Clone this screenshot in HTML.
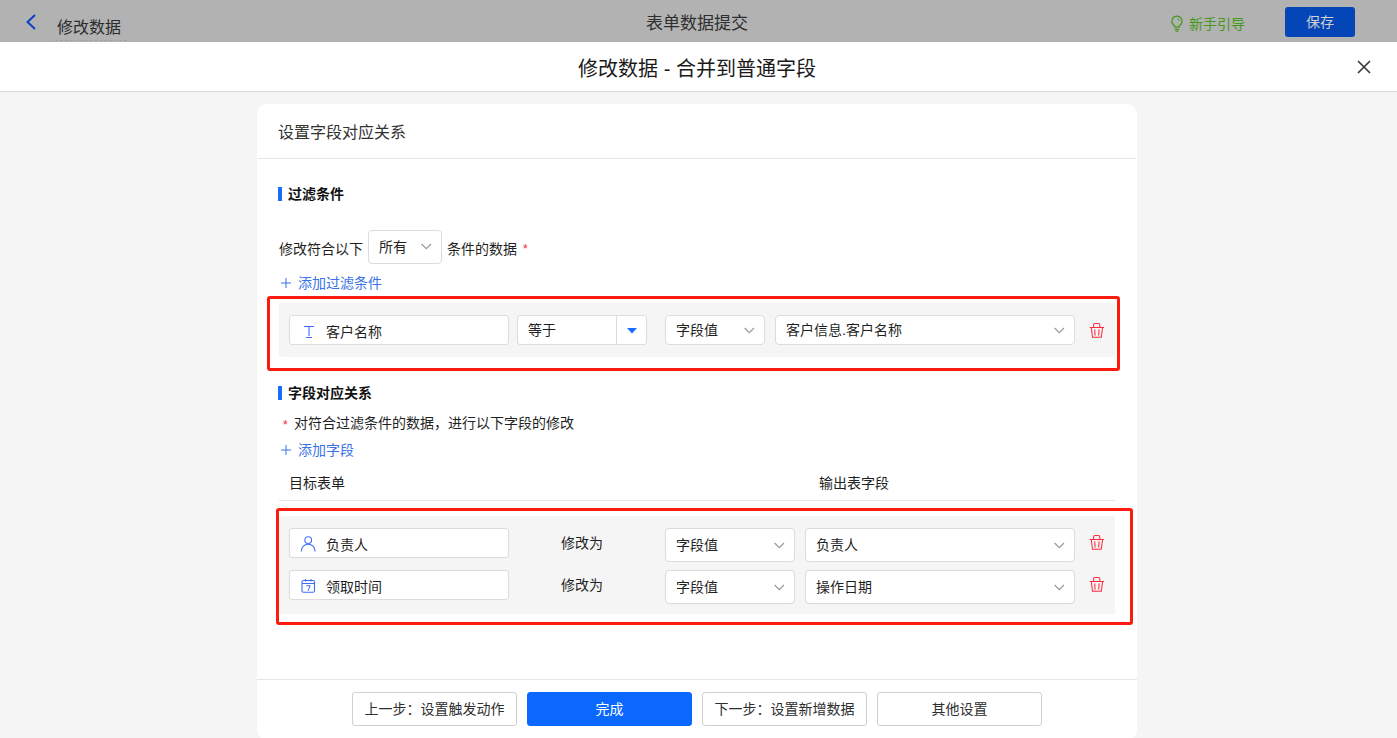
<!DOCTYPE html>
<html lang="zh-CN">
<head>
<meta charset="utf-8">
<title>修改数据 - 合并到普通字段</title>
<style>
*{box-sizing:border-box;margin:0;padding:0}
html,body{width:1397px;height:738px;overflow:hidden;background:#f5f5f5}
body{font-family:"Liberation Sans","Noto Sans CJK SC",sans-serif;font-size:14px;color:#1f1f1f;position:relative}
.abs{position:absolute}
.t{position:absolute;white-space:nowrap;line-height:20px;height:20px}
/* top bar */
#topbar{left:0;top:0;width:1397px;height:42px;background:#b2b2b2}
#back{left:24px;top:13px}
#crumb{left:57px;top:17px;font-size:16px;color:#2c2c2c;line-height:22px;height:22px}
#crumbline{left:55px;top:40px;width:72px;height:0;border-top:1px dashed #a2a2a2}
#toptitle{left:646px;top:13px;font-size:17px;color:#2e2e2e;line-height:22px;height:22px}
#guide{left:1189px;top:14px;font-size:14px;color:#45981c}
#bulb{left:1170px;top:15px}
#save{left:1285px;top:7px;width:70px;height:30px;background:#0445b8;border-radius:3px;color:#d0d0d0;font-size:14px;text-align:center;line-height:30px}
/* modal header */
#mhead{left:0;top:42px;width:1397px;height:50px;background:#fff;border-bottom:1px solid #dcdcdc}
#mtitle{left:0;top:56px;width:1394px;text-align:center;font-size:20px;color:#1a1a1a;line-height:26px;height:26px}
#close{left:1356px;top:59px}
/* card */
#card{left:257px;top:104px;width:880px;height:636px;background:#fff;border-radius:10px}
#ctitle{left:278px;top:122px;font-size:16px;color:#333;line-height:22px;height:22px}
.hr{position:absolute;height:1px;background:#e6e6e6}
.bar{position:absolute;width:4px;height:14px;background:#1a6cff}
.sec{font-weight:bold;color:#111}
.blue{color:#3a72e8}
.red{color:#f5222d}
.box{position:absolute;background:#fff;border:1px solid #dcdcdc;border-radius:4px}
.grayrow{position:absolute;background:#f5f5f5;border-radius:2px}
.redbox{position:absolute;border:3px solid #fd1a0e;border-radius:3px}
.btn{position:absolute;top:692px;width:165px;height:34px;border:1px solid #d0d0d0;border-radius:3px;background:#fff;text-align:center;line-height:32px;font-size:14px;color:#2e2e2e}
.btn.primary{background:#0a68ff;border-color:#0a68ff;color:#fff}
svg{position:absolute;overflow:visible}
</style>
</head>
<body>
<!-- top bar -->
<div id="topbar" class="abs"></div>
<svg id="back" width="14" height="18" viewBox="0 0 14 18"><path d="M11 2 L3.5 9 L11 16" fill="none" stroke="#0b41c4" stroke-width="2"/></svg>
<div id="crumb" class="t">修改数据</div>
<div id="crumbline" class="abs"></div>
<div id="toptitle" class="t">表单数据提交</div>
<svg id="bulb" width="14" height="18" viewBox="0 0 14 18"><path d="M7 1.2a5 5 0 0 0-3 9c.6.5.9 1.2.9 2h4.200c0-.8.3-1.500.9-2a5 5 0 0 0-3-9z" fill="none" stroke="#45981c" stroke-width="1.300"/><path d="M4.800 14.300h4.400M5.500 16.200h3" stroke="#45981c" stroke-width="1.200" fill="none"/><path d="M7.300 3.500a2.600 2.600 0 0 1 2 2.300" stroke="#45981c" stroke-width="1" fill="none"/></svg>
<div id="guide" class="t">新手引导</div>
<div id="save" class="abs">保存</div>

<!-- modal header -->
<div id="mhead" class="abs"></div>
<div id="mtitle" class="t">修改数据 - 合并到普通字段</div>
<svg id="close" width="16" height="16" viewBox="0 0 16 16"><path d="M2 2 L14 14 M14 2 L2 14" fill="none" stroke="#3c3c3c" stroke-width="1.700"/></svg>

<!-- card -->
<div id="card" class="abs"></div>
<div id="ctitle" class="t">设置字段对应关系</div>
<div class="hr" style="left:258px;top:158px;width:878px"></div>

<div class="bar" style="left:278px;top:187px"></div>
<div class="t sec" style="left:288px;top:184px">过滤条件</div>

<div class="t" style="left:279px;top:239px">修改符合以下</div>
<div class="box" style="left:368px;top:230px;width:74px;height:34px"></div>
<div class="t" style="left:379px;top:237px">所有</div>
<svg style="left:421px;top:243px" width="10" height="7" viewBox="0 0 10 7"><path d="M0.600 1 L5.300 5.700 L10 1" fill="none" stroke="#969aa3" stroke-width="1.200"/></svg>
<div class="t" style="left:447px;top:239px">条件的数据</div>
<div class="t red" style="left:523px;top:239px;font-size:12px">*</div>

<svg style="left:281px;top:278px" width="10" height="10" viewBox="0 0 10 10"><path d="M5 0v10M0 5h10" stroke="#3a72e8" stroke-width="1" fill="none"/></svg>
<div class="t blue" style="left:298px;top:273px">添加过滤条件</div>

<div class="grayrow" style="left:279px;top:303px;width:836px;height:54px"></div>
<div class="box" style="left:289px;top:315px;width:220px;height:30px;border-radius:3px"></div>
<svg style="left:303px;top:325px" width="11" height="13" viewBox="0 0 11 13"><path d="M1 1.500h10M6 1.500v9.500M3 12.500h6" stroke="#3d6df7" stroke-width="1.100" fill="none"/></svg>
<div class="t" style="left:326px;top:322px">客户名称</div>

<div class="box" style="left:517px;top:315px;width:130px;height:30px;border-radius:3px"></div>
<div class="abs" style="left:616px;top:316px;width:1px;height:28px;background:#dcdcdc"></div>
<div class="t" style="left:528px;top:320px">等于</div>
<svg style="left:626.500px;top:328px" width="10" height="6" viewBox="0 0 10 6"><path d="M0 0h10L5 5.500z" fill="#1a6cff"/></svg>

<div class="box" style="left:665px;top:315px;width:100px;height:30px"></div>
<div class="t" style="left:676px;top:320px">字段值</div>
<svg style="left:744px;top:327px" width="10" height="7" viewBox="0 0 10 7"><path d="M0.600 1 L5.300 5.700 L10 1" fill="none" stroke="#969aa3" stroke-width="1.200"/></svg>

<div class="box" style="left:775px;top:315px;width:300px;height:30px"></div>
<div class="t" style="left:786px;top:320px">客户信息.客户名称</div>
<svg style="left:1054px;top:327px" width="10" height="7" viewBox="0 0 10 7"><path d="M0.600 1 L5.300 5.700 L10 1" fill="none" stroke="#969aa3" stroke-width="1.200"/></svg>

<svg class="trash" style="left:1089px;top:322px" width="16" height="16" viewBox="0 0 16 16"><path d="M0.800 5.500H15.100M4.600 5.500V2.900a1.400 1.400 0 0 1 1.400-1.400h3.400a1.400 1.400 0 0 1 1.400 1.400V5.500M2.300 5.500L3.500 15.300H12.300L13.600 5.500M5.700 7.400L6.100 13.600M10.100 7.400L9.700 13.600" fill="none" stroke="#ff2a3f" stroke-width="1.050"/></svg>

<div class="redbox" style="left:267px;top:296px;width:853px;height:75px"></div>

<div class="bar" style="left:278px;top:386px"></div>
<div class="t sec" style="left:288px;top:383px">字段对应关系</div>

<div class="t red" style="left:283px;top:415px;font-size:12px">*</div>
<div class="t" style="left:294px;top:413px">对符合过滤条件的数据，进行以下字段的修改</div>

<svg style="left:281px;top:445px" width="10" height="10" viewBox="0 0 10 10"><path d="M5 0v10M0 5h10" stroke="#3a72e8" stroke-width="1" fill="none"/></svg>
<div class="t blue" style="left:298px;top:440px">添加字段</div>

<div class="t" style="left:289px;top:473px">目标表单</div>
<div class="t" style="left:819px;top:473px">输出表字段</div>
<div class="hr" style="left:279px;top:500px;width:836px"></div>

<div class="grayrow" style="left:279px;top:516px;width:836px;height:98px"></div>

<div class="box" style="left:289px;top:528px;width:220px;height:30px;border-radius:3px"></div>
<svg style="left:300px;top:536px" width="16" height="16" viewBox="0 0 16 16"><circle cx="8.200" cy="4.100" r="3.400" fill="none" stroke="#3d6df7" stroke-width="1.100"/><path d="M1.400 15.400v-.6c0-3.800 3-6.600 6.800-6.600s6.800 2.800 6.800 6.600v.6" fill="none" stroke="#3d6df7" stroke-width="1.100"/></svg>
<div class="t" style="left:326px;top:535px">负责人</div>
<div class="t" style="left:561px;top:533px">修改为</div>
<div class="box" style="left:665px;top:528px;width:130px;height:34px"></div>
<div class="t" style="left:676px;top:535px">字段值</div>
<svg style="left:774px;top:542px" width="10" height="7" viewBox="0 0 10 7"><path d="M0.600 1 L5.300 5.700 L10 1" fill="none" stroke="#969aa3" stroke-width="1.200"/></svg>
<div class="box" style="left:805px;top:528px;width:270px;height:34px"></div>
<div class="t" style="left:816px;top:535px">负责人</div>
<svg style="left:1054px;top:542px" width="10" height="7" viewBox="0 0 10 7"><path d="M0.600 1 L5.300 5.700 L10 1" fill="none" stroke="#969aa3" stroke-width="1.200"/></svg>
<svg class="trash" style="left:1089px;top:534px" width="16" height="16" viewBox="0 0 16 16"><path d="M0.800 5.500H15.100M4.600 5.500V2.900a1.400 1.400 0 0 1 1.400-1.400h3.400a1.400 1.400 0 0 1 1.400 1.400V5.500M2.300 5.500L3.500 15.300H12.300L13.600 5.500M5.700 7.400L6.100 13.600M10.100 7.400L9.700 13.600" fill="none" stroke="#ff2a3f" stroke-width="1.050"/></svg>

<div class="box" style="left:289px;top:570px;width:220px;height:30px;border-radius:3px"></div>
<svg style="left:301px;top:578px" width="15" height="15" viewBox="0 0 15 15"><rect x="1" y="2.500" width="12.500" height="11.800" rx="1.500" fill="none" stroke="#3d6df7" stroke-width="1.100"/><path d="M1 5.500h12.500M4.500 1v2.500M10 1v2.500" stroke="#3d6df7" stroke-width="1.100" fill="none"/><path d="M5.400 7.700h3.800l-2.200 5" stroke="#3d6df7" stroke-width="1" fill="none"/></svg>
<div class="t" style="left:326px;top:577px">领取时间</div>
<div class="t" style="left:561px;top:575px">修改为</div>
<div class="box" style="left:665px;top:570px;width:130px;height:34px"></div>
<div class="t" style="left:676px;top:577px">字段值</div>
<svg style="left:774px;top:584px" width="10" height="7" viewBox="0 0 10 7"><path d="M0.600 1 L5.300 5.700 L10 1" fill="none" stroke="#969aa3" stroke-width="1.200"/></svg>
<div class="box" style="left:805px;top:570px;width:270px;height:34px"></div>
<div class="t" style="left:816px;top:577px">操作日期</div>
<svg style="left:1054px;top:584px" width="10" height="7" viewBox="0 0 10 7"><path d="M0.600 1 L5.300 5.700 L10 1" fill="none" stroke="#969aa3" stroke-width="1.200"/></svg>
<svg class="trash" style="left:1089px;top:576px" width="16" height="16" viewBox="0 0 16 16"><path d="M0.800 5.500H15.100M4.600 5.500V2.900a1.400 1.400 0 0 1 1.400-1.400h3.400a1.400 1.400 0 0 1 1.400 1.400V5.500M2.300 5.500L3.500 15.300H12.300L13.600 5.500M5.700 7.400L6.100 13.600M10.100 7.400L9.700 13.600" fill="none" stroke="#ff2a3f" stroke-width="1.050"/></svg>

<div class="redbox" style="left:276px;top:508px;width:857px;height:117px"></div>

<!-- footer -->
<div class="hr" style="left:257px;top:679px;width:880px"></div>
<div class="btn" style="left:352px">上一步：设置触发动作</div>
<div class="btn primary" style="left:527px">完成</div>
<div class="btn" style="left:702px">下一步：设置新增数据</div>
<div class="btn" style="left:877px">其他设置</div>
</body>
</html>
